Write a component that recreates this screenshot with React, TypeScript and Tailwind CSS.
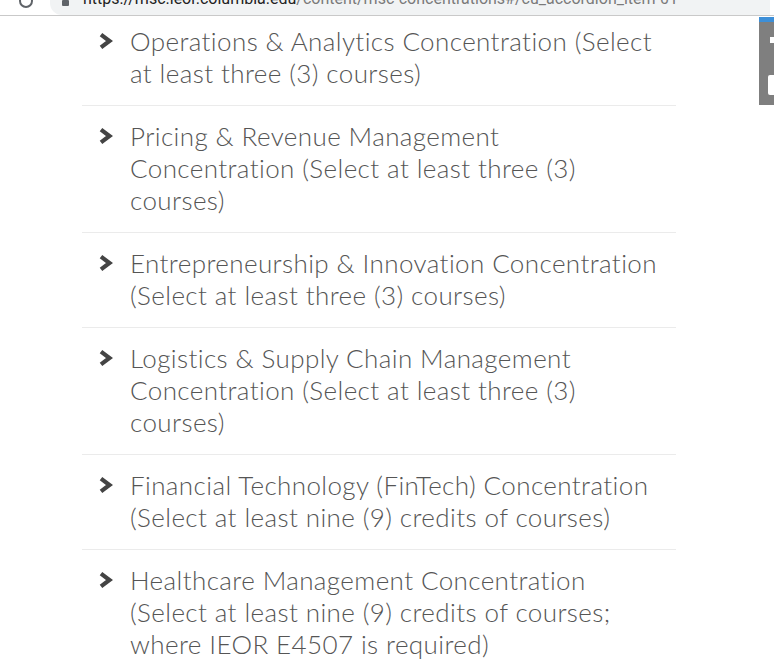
import React from "react";

const items: string[][] = [
  ["Operations & Analytics Concentration (Select", "at least three (3) courses)"],
  ["Pricing & Revenue Management", "Concentration (Select at least three (3)", "courses)"],
  ["Entrepreneurship & Innovation Concentration", "(Select at least three (3) courses)"],
  ["Logistics & Supply Chain Management", "Concentration (Select at least three (3)", "courses)"],
  ["Financial Technology (FinTech) Concentration", "(Select at least nine (9) credits of courses)"],
  [
    "Healthcare Management Concentration",
    "(Select at least nine (9) credits of courses;",
    "where IEOR E4507 is required)",
  ],
];

function Chevron() {
  return (
    <svg width="16" height="18" viewBox="0 0 16 18" className="shrink-0">
      <path d="M3 2.6 L11.5 9 L3 15.4" fill="none" stroke="#444" strokeWidth="4.2" strokeLinejoin="miter" />
    </svg>
  );
}

export default function App() {
  return (
    <div className="relative w-[774px] h-[663px] overflow-hidden bg-white" style={{ fontFamily: "Lato, 'Open Sans', sans-serif" }}>
      {/* browser address bar, mostly scrolled off */}
      <div className="flex items-end h-[16px] border-b border-[#c9c9c9] bg-white overflow-hidden">
        <div className="w-[50px] flex items-end pl-[19px]">
          <div className="w-[14px] h-[14px] mb-[7px] rounded-full border-2 border-[#5f6368] shrink-0" />
        </div>
        <div className="flex-1 self-stretch flex items-end gap-[14px] pl-[12px] bg-[#f1f3f4] rounded-bl-[12px] mr-[4px]">
          <div className="w-[7px] h-[6px] mb-[9px] bg-[#5f6368] rounded-[1px] shrink-0" />
          <div
            className="mb-[6px] text-[16px] leading-[20px] whitespace-nowrap text-[#7a7a7a]"
            style={{ fontFamily: "Roboto, sans-serif" }}
          >
            <span className="text-[#222]">https://msc.ieor.columbia.edu</span>/content/msc-concentrations#/cu_accordion_item-01
          </div>
        </div>
      </div>

      {/* side widget, overlays the page */}
      <div className="absolute right-0 top-[17px] w-[15px] h-[88px] bg-[#7f7f7f] flex flex-col items-end">
        <div className="h-[5px] w-full bg-[#3d8fd8]" />
        <div className="mt-[15px] w-[4px] h-[6px] bg-white" />
        <div className="mt-[32px] w-[6px] h-[20px] bg-white rounded-l-[2px]" />
      </div>

      <div className="ml-[82px] w-[594px]">
        {items.map((lines, i) => (
          <div
            key={i}
            className={`flex gap-[16px] pl-[16px] pb-[16px] ${i === 0 ? "pt-[9px]" : "pt-[14px]"} ${
              i < items.length - 1 ? "border-b border-[#ebebeb]" : ""
            }`}
          >
            <div className="h-[32px] flex items-center">
              <Chevron />
            </div>
            <div className="text-[26px] leading-[32px] font-light tracking-[0.4px] text-[#555]">
              {lines.map((l, j) => (
                <div key={j} className="whitespace-nowrap">
                  {l}
                </div>
              ))}
            </div>
          </div>
        ))}
      </div>
    </div>
  );
}
